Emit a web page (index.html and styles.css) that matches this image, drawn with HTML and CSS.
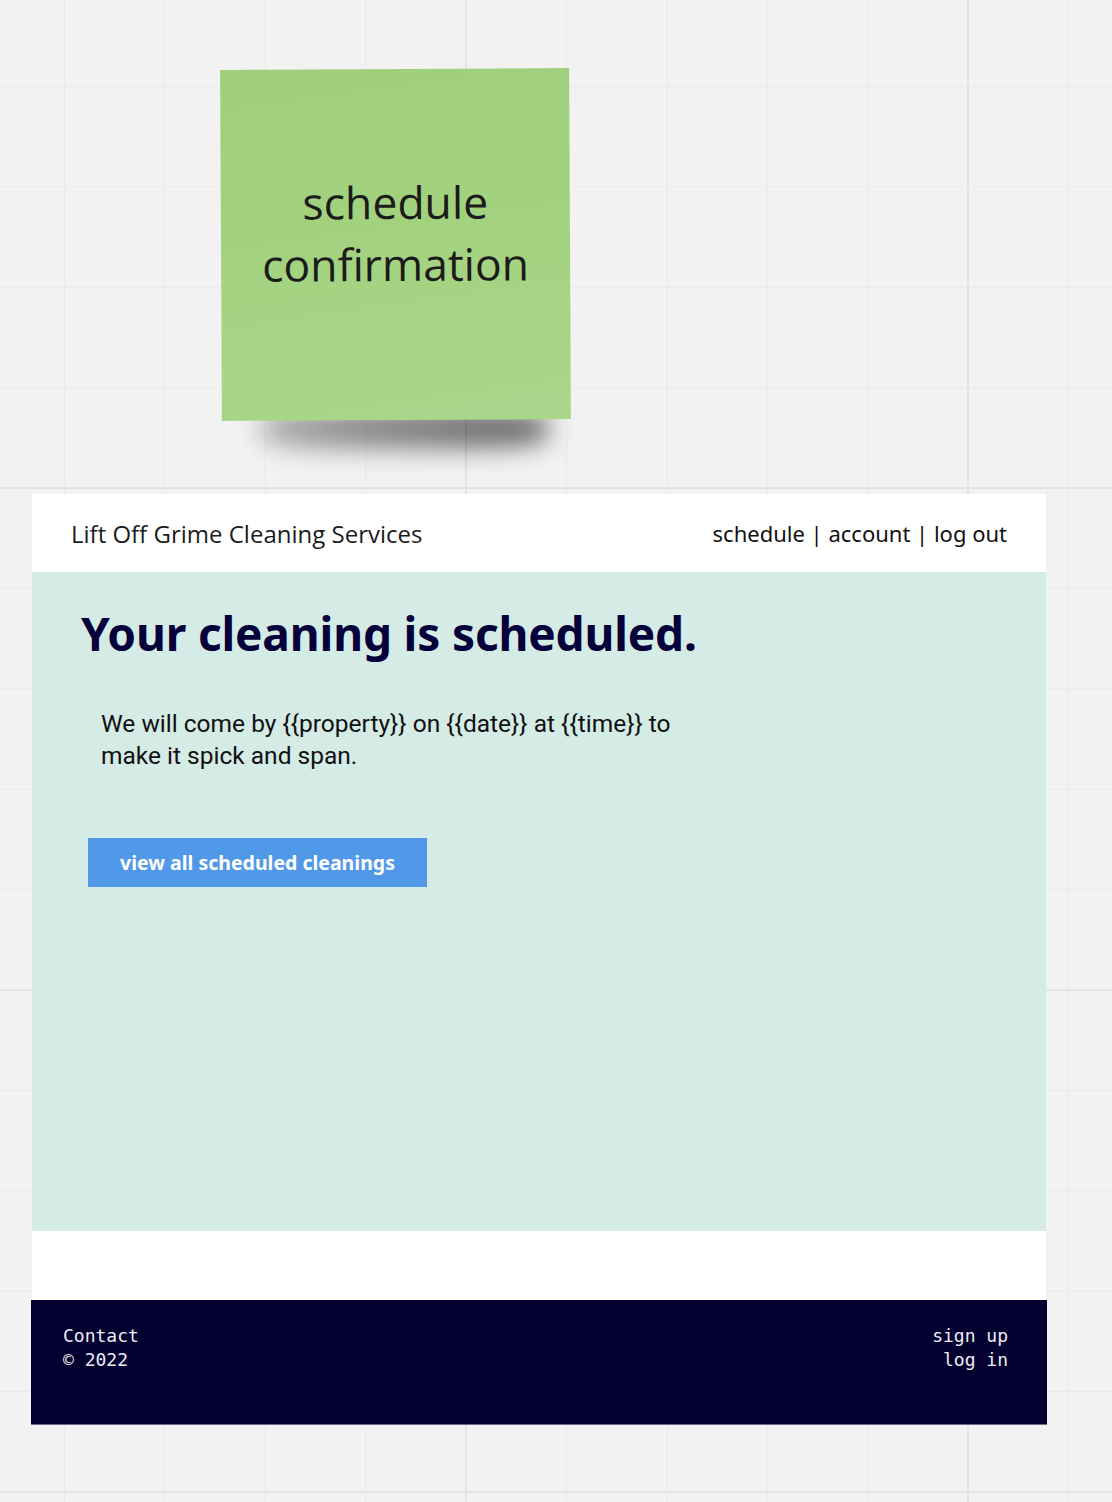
FILE: index.html
```html
<!DOCTYPE html>
<html lang="en">
<head>
<meta charset="utf-8">
<title>schedule confirmation</title>
<link rel="stylesheet" href="styles.css">
</head>
<body>
<div class="canvas">
  <div class="note-wrap">
    <div class="note">
      <p class="note-text">schedule<br>confirmation</p>
    </div>
  </div>
  <div class="frame">
    <header class="site-header">
      <div class="brand">Lift Off Grime Cleaning Services</div>
      <nav class="nav">schedule | account | log out</nav>
    </header>
    <main class="hero">
      <h1 class="title">Your cleaning is scheduled.</h1>
      <p class="lead">We will come by {{property}} on {{date}} at {{time}} to make it spick and span.</p>
      <button class="btn">view all scheduled cleanings</button>
    </main>
    <div class="spacer"></div>
  </div>
  <footer class="site-footer">
    <div class="foot-left">Contact<br>© 2022</div>
    <div class="foot-right">sign up<br>log in</div>
  </footer>
</div>
</body>
</html>
```

FILE: styles.css
```css
html, body {
  margin: 0;
  padding: 0;
}
body {
  width: 1112px;
  height: 1502px;
  overflow: hidden;
  background-color: #f2f2f2;
  background-image:
    linear-gradient(to right, #e3e3e3 0, #e3e3e3 2px, transparent 2px),
    linear-gradient(to bottom, #e3e3e3 0, #e3e3e3 2px, transparent 2px),
    linear-gradient(to right, #e9e9e9 0, #e9e9e9 1px, transparent 1px),
    linear-gradient(to bottom, #e9e9e9 0, #e9e9e9 1px, transparent 1px);
  background-size: 502px 502px, 502px 502px, 100.4px 100.4px, 100.4px 100.4px;
  background-position: 465px 0, 0 487px, 64px 0, 0 86px;
  font-family: "Open Sans", sans-serif;
}
.canvas {
  padding-top: 69px;
}
.note-wrap {
  position: relative;
  width: 349px;
  height: 351px;
  margin-left: 221px;
}
.note-wrap::before {
  content: "";
  position: absolute;
  left: 40px;
  right: 22px;
  bottom: -28px;
  height: 38px;
  background: linear-gradient(to right, rgba(0,0,0,0.3), rgba(0,0,0,0.45) 40%, rgba(0,0,0,0.6));
  filter: blur(13px);
  border-radius: 30%;
}
.note {
  position: relative;
  width: 100%;
  height: 100%;
  background: linear-gradient(172deg, #9fcf7c 0%, #a3d27f 45%, #a9d68b 100%);
  transform: rotate(-0.3deg);
  box-sizing: border-box;
  padding-top: 102px;
}
.note-text {
  margin: 0;
  text-align: center;
  font-family: "Open Sans", sans-serif;
  font-size: 44.5px;
  line-height: 62px;
  color: #1b1b1b;
}
.frame {
  margin: 74px 0 0 32px;
  width: 1014px;
  background: #fff;
}
.site-header {
  height: 78px;
  display: flex;
  align-items: center;
  justify-content: space-between;
  padding: 0 39px;
  box-sizing: border-box;
}
.brand {
  font-family: "Open Sans", sans-serif;
  font-size: 24px;
  color: #1c1c1c;
}
.nav {
  font-family: "Noto Sans", sans-serif;
  font-size: 22px;
  color: #111;
}
.hero {
  height: 659px;
  background: #d5ebe6;
  padding: 26px 0 0 49px;
  box-sizing: border-box;
}
.title {
  margin: 0;
  font-family: "Noto Sans", sans-serif;
  font-weight: 700;
  font-size: 46px;
  line-height: 70px;
  color: #05003a;
  letter-spacing: -0.15px;
}
.lead {
  margin: 40px 0 0 20px;
  width: 590px;
  font-family: "Roboto", sans-serif;
  font-size: 24.5px;
  line-height: 32px;
  color: #111;
}
.btn {
  display: block;
  margin: 66px 0 0 7px;
  width: 339px;
  height: 49px;
  border: none;
  background: #5199e8;
  color: #fff;
  font-family: "Noto Sans", sans-serif;
  font-weight: 700;
  font-size: 19.5px;
  padding: 0;
}
.spacer {
  height: 69px;
}
.site-footer {
  margin-left: 31px;
  width: 1016px;
  height: 125px;
  background: #03002f;
  border-bottom: 1px solid #6e6c90;
  box-sizing: border-box;
  display: flex;
  justify-content: space-between;
  padding: 24px 39px 0 32px;
  font-family: "DejaVu Sans Mono", monospace;
  font-size: 18px;
  line-height: 24px;
  color: #ececf4;
}
.foot-right {
  text-align: right;
}
```
